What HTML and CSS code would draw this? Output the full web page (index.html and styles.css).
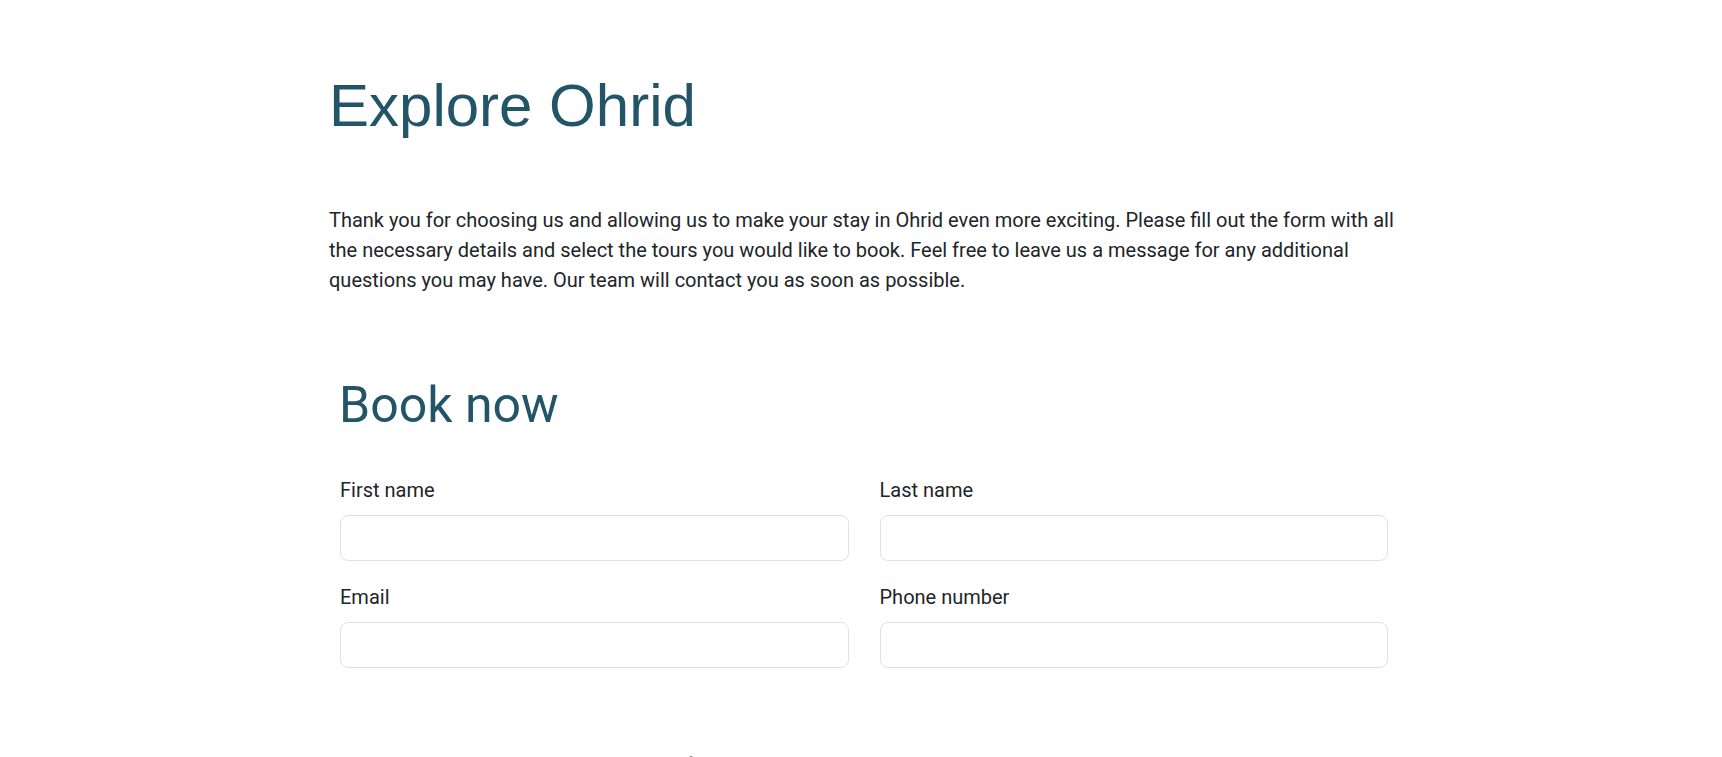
FILE: index.html
```html
<!DOCTYPE html>
<html lang="en">
<head>
<meta charset="utf-8">
<title>Explore Ohrid</title>
<link rel="stylesheet" href="styles.css">
</head>
<body>
<main class="page">
  <h1 class="title">Explore Ohrid</h1>
  <p class="intro">Thank you for choosing us and allowing us to make your stay in Ohrid even more exciting. Please fill out the form with all the necessary details and select the tours you would like to book. Feel free to leave us a message for any additional questions you may have. Our team will contact you as soon as possible.</p>
  <section class="booking">
    <h2 class="booking-title">Book now</h2>
    <form class="form-grid">
      <div class="field">
        <label class="field-label" for="fn">First name</label>
        <input class="field-input" id="fn" type="text">
      </div>
      <div class="field">
        <label class="field-label" for="ln">Last name</label>
        <input class="field-input" id="ln" type="text">
      </div>
      <div class="field">
        <label class="field-label" for="em">Email</label>
        <input class="field-input" id="em" type="email">
      </div>
      <div class="field">
        <label class="field-label" for="ph">Phone number</label>
        <input class="field-input" id="ph" type="tel">
      </div>
    </form>
    <p class="tours-note">Select the tours you would like to book from the list below and let us know the date that suits you best.</p>
  </section>
</main>
</body>
</html>
```

FILE: styles.css
```css
html, body {
  margin: 0;
  padding: 0;
  background: #ffffff;
}

body {
  font-family: Roboto, "Liberation Sans", sans-serif;
  color: #212529;
  overflow: hidden;
}

.page {
  width: 1064px;
  margin: 0 auto;
  padding-top: 70px;
}

.title {
  margin: 0;
  font-family: "Liberation Sans", Arial, sans-serif;
  font-weight: 400;
  font-size: 60px;
  line-height: 72px;
  color: #215567;
}

.intro {
  margin: 63px -14px 0 0;
  font-size: 20px;
  line-height: 30px;
}

.booking {
  padding-left: 10px;
  padding-right: 5px;
  margin-top: 80px;
}

.booking-title {
  margin: 0;
  font-weight: 400;
  font-size: 50px;
  line-height: 60px;
  color: #215567;
}

.form-grid {
  margin-top: 41px;
  padding-left: 1px;
  display: grid;
  grid-template-columns: 1fr 1fr;
  column-gap: 31px;
  row-gap: 22px;
}

.field {
  display: flex;
  flex-direction: column;
}

.field-label {
  font-size: 20px;
  line-height: 28.8px;
  margin-bottom: 10px;
}

.field-input {
  box-sizing: border-box;
  height: 46px;
  width: 100%;
  border: 1px solid #dee2e6;
  border-radius: 8px;
  background: #fff;
  padding: 6px 12px;
  font: inherit;
}

.tours-note {
  margin: 82px 0 0;
  font-size: 20px;
  line-height: 30px;
}
```
